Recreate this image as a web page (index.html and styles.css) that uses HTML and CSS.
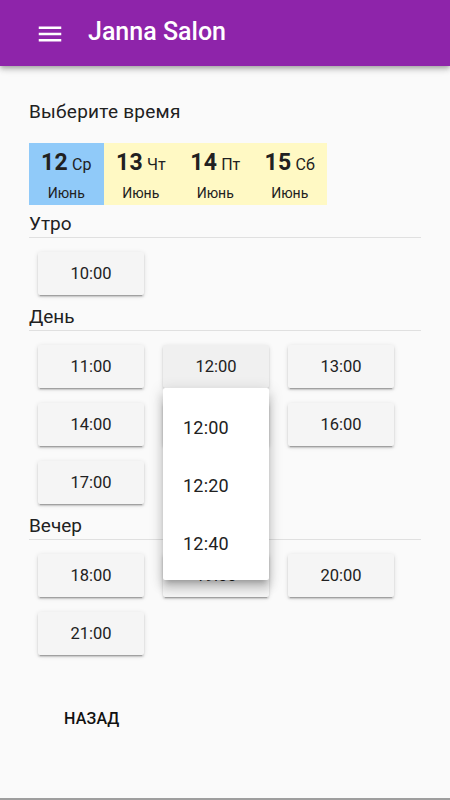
FILE: index.html
```html
<!DOCTYPE html>
<html lang="ru">
<head>
<meta charset="utf-8">
<title>Janna Salon</title>
<link rel="stylesheet" href="styles.css">
</head>
<body>
<header class="appbar">
  <svg class="menu-icon" width="24" height="24" viewBox="0 0 24 24"><path d="M3 18h18v-2H3v2zm0-5h18v-2H3v2zm0-7v2h18V6H3z" fill="#fff"/></svg>
  <h1 class="appbar-title">Janna Salon</h1>
</header>
<main class="content">
  <h2 class="page-title">Выберите время</h2>
  <div class="days">
    <div class="day day-active"><div class="day-top"><span class="day-num">12</span><span class="day-wd">Ср</span></div><div class="day-month">Июнь</div></div>
    <div class="day"><div class="day-top"><span class="day-num">13</span><span class="day-wd">Чт</span></div><div class="day-month">Июнь</div></div>
    <div class="day"><div class="day-top"><span class="day-num">14</span><span class="day-wd">Пт</span></div><div class="day-month">Июнь</div></div>
    <div class="day"><div class="day-top"><span class="day-num">15</span><span class="day-wd">Сб</span></div><div class="day-month">Июнь</div></div>
  </div>

  <section class="period period-first">
    <div class="period-label">Утро</div>
    <div class="slots">
      <div class="slot"><button class="slot-btn">10:00</button></div>
    </div>
  </section>

  <section class="period">
    <div class="period-label">День</div>
    <div class="slots">
      <div class="slot"><button class="slot-btn">11:00</button></div>
      <div class="slot slot-open"><button class="slot-btn">12:00</button>
        <div class="menu">
          <div class="menu-item">12:00</div>
          <div class="menu-item">12:20</div>
          <div class="menu-item">12:40</div>
        </div>
      </div>
      <div class="slot"><button class="slot-btn">13:00</button></div>
      <div class="slot"><button class="slot-btn">14:00</button></div>
      <div class="slot"><button class="slot-btn">15:00</button></div>
      <div class="slot"><button class="slot-btn">16:00</button></div>
      <div class="slot"><button class="slot-btn">17:00</button></div>
    </div>
  </section>

  <section class="period">
    <div class="period-label">Вечер</div>
    <div class="slots">
      <div class="slot"><button class="slot-btn">18:00</button></div>
      <div class="slot"><button class="slot-btn">19:00</button></div>
      <div class="slot"><button class="slot-btn">20:00</button></div>
      <div class="slot"><button class="slot-btn">21:00</button></div>
    </div>
  </section>

  <button class="back-btn">НАЗАД</button>
</main>
<div class="bottom-edge"></div>
</body>
</html>
```
FILE: styles.css
```css
html, body {
  margin: 0;
  padding: 0;
  height: 100%;
}
body {
  background: #fafafa;
  font-family: Roboto, "Noto Sans", sans-serif;
  color: #212121;
  display: flex;
  flex-direction: column;
  overflow: hidden;
}
.appbar {
  height: 66px;
  flex: 0 0 66px;
  background: #8e24aa;
  display: flex;
  align-items: center;
  box-shadow: 0 2px 4px -1px rgba(0,0,0,.2), 0 4px 5px 0 rgba(0,0,0,.14), 0 1px 10px 0 rgba(0,0,0,.12);
  position: relative;
  z-index: 2;
}
.menu-icon {
  width: 30px;
  height: 30px;
  margin-left: 35px;
  margin-top: 2px;
}
.appbar-title {
  margin: 0 0 0 23px;
  font-size: 25px;
  font-weight: 500;
  color: #fff;
  line-height: 30px;
  margin-top: -3px;
}
.content {
  flex: 1;
  padding: 0 29px;
}
.page-title {
  margin: 35px 0 20px;
  font-size: 19px;
  line-height: 22px;
  font-weight: 400;
  color: #212121;
  letter-spacing: 0.25px;
}
.days {
  display: flex;
  width: 298px;
  height: 62px;
}
.day {
  flex: 1;
  background: #fff9c4;
  display: flex;
  flex-direction: column;
  align-items: center;
  padding-top: 7px;
  box-sizing: border-box;
}
.day-active {
  background: #90caf9;
}
.day-top {
  display: flex;
  align-items: baseline;
  gap: 4px;
  line-height: 26px;
}
.day-num {
  font-size: 23px;
  font-weight: 700;
  letter-spacing: 0.3px;
}
.day-wd {
  font-size: 16px;
}
.day-month {
  font-size: 14px;
  line-height: 16px;
  margin-top: 7px;
}
.period {
  margin-top: 11px;
}
.period-first {
  margin-top: 8px;
}
.period-label {
  font-size: 19px;
  line-height: 22px;
  padding-bottom: 2px;
  border-bottom: 1px solid #e0e0e0;
  width: 392px;
}
.slots {
  display: grid;
  grid-template-columns: repeat(3, 106px);
  column-gap: 19px;
  row-gap: 15px;
  padding: 14px 0 0 9px;
}
.slot {
  position: relative;
}
.slot-btn {
  display: block;
  width: 106px;
  height: 43px;
  border: none;
  border-radius: 2px;
  background: #f5f5f5;
  font-family: Roboto, sans-serif;
  font-size: 16.5px;
  font-weight: 400;
  color: #212121;
  box-shadow: 0 3px 1px -2px rgba(0,0,0,.2), 0 2px 2px 0 rgba(0,0,0,.14), 0 1px 5px 0 rgba(0,0,0,.12);
  padding: 0;
}
.slot-open .slot-btn {
  background: #f0f0f0;
}
.menu {
  position: absolute;
  top: 43px;
  left: 0;
  width: 106px;
  padding: 11px 0 7px;
  background: #fff;
  border-radius: 2px;
  box-shadow: 0 5px 5px -3px rgba(0,0,0,.2), 0 8px 10px 1px rgba(0,0,0,.14), 0 3px 14px 2px rgba(0,0,0,.12);
  z-index: 3;
}
.menu-item {
  height: 58px;
  line-height: 58px;
  padding-left: 20px;
  font-size: 18px;
  letter-spacing: 0.2px;
  color: #212121;
}
.back-btn {
  display: block;
  margin: 45px 0 0 19px;
  height: 36px;
  padding: 0 16px;
  border: none;
  background: transparent;
  font-family: Roboto, sans-serif;
  font-size: 16px;
  font-weight: 500;
  color: #111;
  letter-spacing: 0.2px;
}
.bottom-edge {
  height: 2px;
  flex: 0 0 2px;
  background: #9e9e9e;
}
```
